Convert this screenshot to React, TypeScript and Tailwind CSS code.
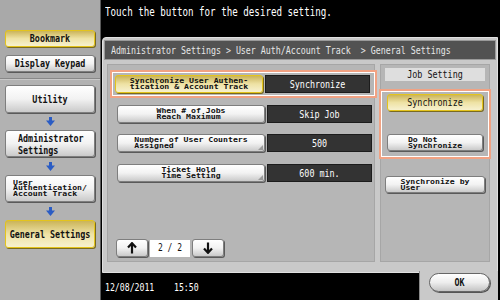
import React from 'react';

const btn =
  'rounded-[3px] border border-[#7e7e7e] bg-gradient-to-b from-white via-[#f2f2f2] to-[#cacaca] shadow-[1px_1px_0_#5a5a5a] text-[#111]';
const yel =
  'rounded-[3px] border border-[#e4c41c] bg-gradient-to-b from-[#cbb458] via-[#eee2a4] to-[#f7f1cf] shadow-[1px_1px_0_#7a6a20] text-[#111]';
const valueBox =
  'flex items-center justify-center bg-[#333333] border border-[#1c1c1c] text-white';

const Tall: React.FC<{ children: React.ReactNode; className?: string }> = ({ children, className = '' }) => (
  <span className={`inline-block scale-y-[1.25] whitespace-pre ${className}`}>{children}</span>
);

const Small: React.FC<{ children: React.ReactNode; className?: string }> = ({ children, className = '' }) => (
  <span className={`block scale-y-[0.78] text-[8.2px] leading-[7px] font-bold whitespace-pre ${className}`}>
    {children}
  </span>
);

const BlueArrow = () => (
  <svg width="9" height="9" viewBox="0 0 9 9" className="mx-auto">
    <rect x="3" y="0" width="3" height="4" fill="#2a5cc4" />
    <polygon points="0,3.5 9,3.5 4.5,9" fill="#2a5cc4" />
  </svg>
);

const Corner = () => (
  <span className="absolute right-[1px] bottom-[1px] w-0 h-0 border-l-[5px] border-l-transparent border-b-[5px] border-b-[#9a9a9a]" />
);

const PageArrow: React.FC<{ up?: boolean }> = ({ up }) => (
  <svg width="10" height="12" viewBox="0 0 10 12" className={up ? '' : 'rotate-180'}>
    <path d="M5 11.5V2" stroke="#111" strokeWidth="2.2" />
    <path d="M1 5.5L5 1.2L9 5.5" stroke="#111" strokeWidth="2.2" fill="none" />
  </svg>
);

const SettingRow: React.FC<{ label: string; value: string; corner?: boolean; className?: string }> = ({
  label,
  value,
  corner,
  className = '',
}) => (
  <div className={`flex gap-[2px] ml-[9px] h-[18px] ${className}`}>
    <div className={`${btn} relative w-[148px] flex items-center justify-center`}>
      <Small className="text-left">{label}</Small>
      {corner && <Corner />}
    </div>
    <div className={`${valueBox} w-[105px] text-[8.4px]`}>
      <Tall>{value}</Tall>
    </div>
  </div>
);

export default function App() {
  return (
    <div className="flex w-[500px] h-[300px] overflow-hidden bg-black font-['DejaVu_Sans_Mono','Liberation_Mono',monospace]">
      {/* sidebar */}
      <aside className="w-[101px] h-full flex flex-col border-r border-[#5a5a5a]">
        <div className="h-[79px] bg-[#a9a9a9] px-[5px] pt-[30px] flex flex-col gap-[8px] border-b border-[#888]">
          <div className={`${yel} h-[17px] flex items-center justify-center text-[8.4px] font-bold`}>
            <Tall>Bookmark</Tall>
          </div>
          <div className={`${btn} h-[17px] flex items-center justify-center text-[8.4px] font-bold`}>
            <Tall>Display Keypad</Tall>
          </div>
        </div>
        <div className="flex-1 bg-[#b2b2b2] border-t border-[#c8c8c8] px-[5px] pt-[5px] flex flex-col">
          <div className={`${btn} h-[28px] flex items-center justify-center text-[8.4px] font-bold`}>
            <Tall>Utility</Tall>
          </div>
          <div className="h-[17px] flex items-center">
            <BlueArrow />
          </div>
          <div className={`${btn} h-[27px] flex items-center pl-[12px] text-[8.4px] font-bold leading-[10px]`}>
            <Tall>{'Administrator\nSettings'}</Tall>
          </div>
          <div className="h-[18px] flex items-center">
            <BlueArrow />
          </div>
          <div className={`${btn} h-[27px] flex items-center pl-[7px]`}>
            <Small>{'User\nAuthentication/\nAccount Track'}</Small>
          </div>
          <div className="h-[18px] flex items-center">
            <BlueArrow />
          </div>
          <div className={`${yel} h-[28px] flex items-center justify-center text-[8.4px] font-bold`}>
            <Tall>General Settings</Tall>
          </div>
        </div>
      </aside>

      {/* main */}
      <main className="flex-1 flex flex-col">
        <div className="h-[37px] pl-[4px] pt-[5px] text-white text-[9.2px]">
          <Tall>Touch the button for the desired setting.</Tall>
        </div>

        <div className="ml-[1px] mr-[2px] h-[236px] bg-[#c9c9c9] rounded-tl-[4px] border border-[#e0e0e0] flex flex-col">
          <div className="mx-[1px] mt-[2px] h-[20px] bg-[#525252] border border-[#9a9a9a] flex items-center pl-[6px] text-[#e6e6e6] text-[8.3px]">
            <Tall>Administrator Settings &gt; User Auth/Account Track  &gt; General Settings</Tall>
          </div>

          <div className="flex gap-[5px] mt-[4px] pl-[4px]">
            {/* left panel */}
            <div className="w-[268px] h-[198px] bg-[#b6b6b6] border border-[#a6a6a6] flex flex-col">
              <div className="ml-[2px] mt-[5px] w-[267px] h-[28px] border-2 border-[#f1a283] relative z-10">
                <div className="h-full border border-white flex items-center gap-[2px] pl-[2px]">
                  <div className={`${yel} w-[148px] h-[18px] flex items-center justify-center`}>
                    <Small>{'Synchronize User Authen-\ntication & Account Track'}</Small>
                  </div>
                  <div className={`${valueBox} w-[105px] h-[18px] text-[8.4px]`}>
                    <Tall>Synchronize</Tall>
                  </div>
                </div>
              </div>
              <SettingRow className="mt-[7px]" label={'When # of Jobs\nReach Maximum'} value="Skip Job" />
              <SettingRow className="mt-[11px]" label={'Number of User Counters\nAssigned'} value="500" corner />
              <SettingRow className="mt-[12px]" label={'Ticket Hold\nTime Setting'} value="600 min." corner />

              <div className="mt-auto mb-[4px] ml-[8px] flex items-center gap-[2px] h-[18px]">
                <div className={`${btn} w-[32px] h-[18px] flex items-center justify-center`}>
                  <PageArrow up />
                </div>
                <div className="w-[40px] h-[17px] bg-white flex items-center justify-center text-[8px] text-[#111]">
                  <Tall>2 / 2</Tall>
                </div>
                <div className={`${btn} w-[32px] h-[18px] flex items-center justify-center`}>
                  <PageArrow />
                </div>
              </div>
            </div>

            {/* right panel */}
            <div className="w-[110px] h-[198px] bg-[#b6b6b6] border border-[#a6a6a6] flex flex-col px-[4px]">
              <div className="mt-[3px] h-[13px] bg-[#dedede] flex items-center justify-center text-[8.4px] text-[#111]">
                <Tall>Job Setting</Tall>
              </div>
              <div className="-mx-[6px] mt-[8px] h-[70px] border-2 border-[#f1a283]">
                <div className="h-full border border-white px-[5px] pt-[2px] flex flex-col">
                  <div className={`${yel} h-[17px] flex items-center justify-center text-[8.4px]`}>
                    <Tall>Synchronize</Tall>
                  </div>
                  <div className={`${btn} mt-[23px] h-[17px] flex items-center justify-center`}>
                    <Small className="text-left">{'Do Not\nSynchronize'}</Small>
                  </div>
                </div>
              </div>
              <div className={`${btn} mt-[17px] h-[17px] flex items-center justify-center`}>
                <Small className="text-left">{'Synchronize by\nUser'}</Small>
              </div>
            </div>
          </div>
        </div>

        <div className="flex-1 flex">
          <div className="flex-1 pl-[4px] pt-[8px] text-white text-[8.2px]">
            <Tall>{'12/08/2011    15:50'}</Tall>
          </div>
          <div className="w-[79px] mr-[2px] -mt-[2px] bg-[#c9c9c9] border-l border-[#8a8a8a] pl-[9px] pt-[2px]">
            <div className="w-[61px] h-[19px] rounded-full border border-[#666] bg-gradient-to-b from-white via-[#ededed] to-[#c4c4c4] shadow-[1px_1px_0_#555] flex items-center justify-center text-[8.4px] font-bold text-[#111]">
              <Tall>OK</Tall>
            </div>
          </div>
        </div>
      </main>
    </div>
  );
}
